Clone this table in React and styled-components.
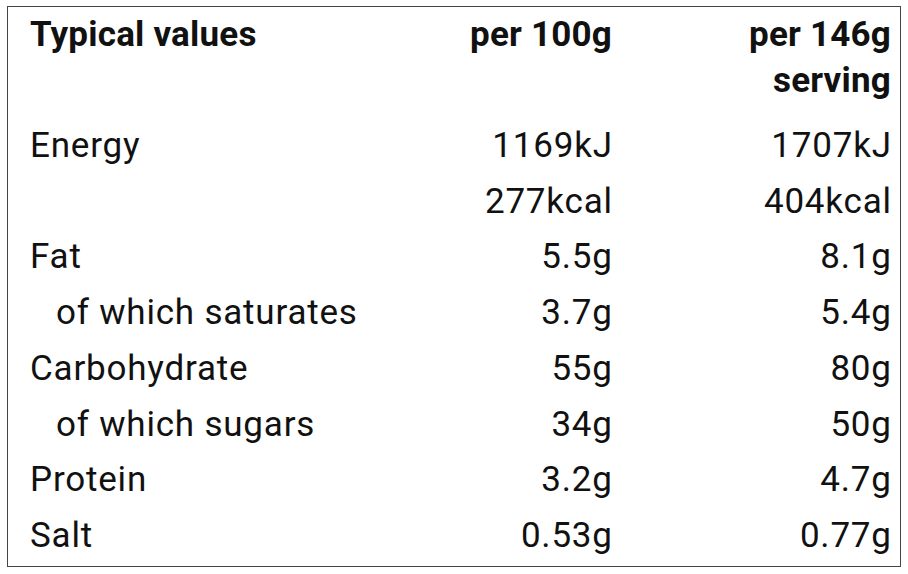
import styled, { createGlobalStyle } from "styled-components"

const GlobalStyle = createGlobalStyle`
  body {
    margin: 0;
    background: #fff;
    font-family: Roboto, "Liberation Sans", sans-serif;
    color: #111;
  }
`

const rows = [
  { label: "Energy", per100: "1169kJ", serving: "1707kJ" },
  { label: "", per100: "277kcal", serving: "404kcal" },
  { label: "Fat", per100: "5.5g", serving: "8.1g" },
  { label: "of which saturates", per100: "3.7g", serving: "5.4g", sub: true },
  { label: "Carbohydrate", per100: "55g", serving: "80g" },
  { label: "of which sugars", per100: "34g", serving: "50g", sub: true },
  { label: "Protein", per100: "3.2g", serving: "4.7g" },
  { label: "Salt", per100: "0.53g", serving: "0.77g" },
]

export default function App() {
  // Render
  return (
    <>
      <GlobalStyle />
      <Page>
        <NutritionTable>
          <HeadCell>Typical values</HeadCell>
          <HeadCell $right>per 100g</HeadCell>
          <HeadCell $right>per 146g<br />serving</HeadCell>
          {rows.map((row, i) => (
            <Row key={i}>
              <Cell $sub={row.sub}>{row.label}</Cell>
              <Cell $right>{row.per100}</Cell>
              <Cell $right>{row.serving}</Cell>
            </Row>
          ))}
        </NutritionTable>
      </Page>
    </>
  )
}

// Styles
const Page = styled.div`
  padding: 6px 0 0 7px;
`

const NutritionTable = styled.div`
  box-sizing: border-box;
  width: 894px;
  height: 561px;
  border: 1px solid #454545;
  padding: 5px 9px 0 22px;
  display: grid;
  grid-template-columns: 1fr 200px 279px;
  align-content: start;
  font-size: 35px;
  line-height: 45.5px;
`

const HeadCell = styled.div`
  font-weight: 700;
  letter-spacing: 0.2px;
  padding-bottom: 15px;
  text-align: ${({ $right }) => ($right ? "right" : "left")};
`

const Row = styled.div`
  display: contents;
`

const Cell = styled.div`
  padding: 5px 0 5px ${({ $sub }) => ($sub ? "26px" : "0")};
  line-height: 45.7px;
  letter-spacing: 0.8px;
  margin-right: ${({ $right }) => ($right ? "-0.8px" : "0")};
  text-align: ${({ $right }) => ($right ? "right" : "left")};
  white-space: nowrap;
`
